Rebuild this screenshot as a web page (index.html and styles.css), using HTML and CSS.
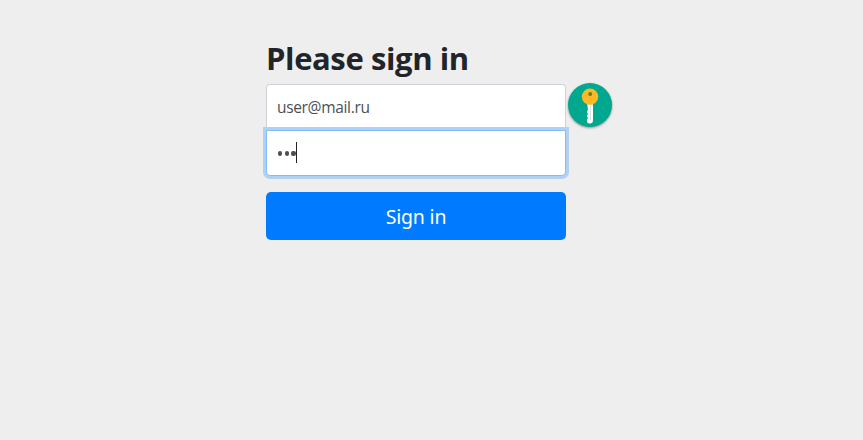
FILE: index.html
```html
<!DOCTYPE html>
<html lang="en">
<head>
<meta charset="utf-8">
<title>Sign in</title>
<link rel="stylesheet" href="styles.css">
</head>
<body>
<form class="signin">
  <h2 class="title">Please sign in</h2>
  <div class="field email"><span class="value">user@mail.ru</span>
    <svg class="key" viewBox="0 0 50 50" aria-hidden="true">
      <circle class="disc" cx="25" cy="25" r="22"/>
      <path class="blade" d="M22 22h6v18q0 3.500-3 3.500q-3 0-3-2.500v-2l1.500-1-1.500-1v-2l1.500-1-1.500-1v-2l1-1z"/>
      <path class="groove" d="M25.500 26v14"/>
      <circle class="bow" cx="25" cy="16.800" r="8.200"/>
      <circle class="hole" cx="25.200" cy="14" r="2"/>
    </svg>
  </div>
  <div class="field password"><span class="dots"><i></i><i></i><i></i></span><span class="caret"></span></div>
  <button class="submit" type="button">Sign in</button>
</form>
</body>
</html>
```
FILE: styles.css
```css
* { box-sizing: border-box; }
body { margin: 0; padding-top: 40px; background: #eee; color: #212529; font: 16px/1.5 "Open Sans", "Noto Sans", sans-serif; }
.signin { width: 300px; margin-left: 266px; }
.title { margin: 0 0 8px; font: 700 31px/36px "Open Sans", "Noto Sans", sans-serif; letter-spacing: -.4px; white-space: nowrap; }
.field { position: relative; display: flex; align-items: center; height: 46px; padding: 0 10px; border: 1px solid #ced4da; border-radius: 4px; background: #fff; color: #495057; }
.email { border-radius: 4px 4px 0 0; border-bottom: 0; }
.value { font-size: 15.5px; letter-spacing: -.33px; }
.password { padding-bottom: 2px; border-color: #80bdff; border-radius: 0 0 4px 4px; box-shadow: 0 0 0 3px #b2d0f2; }
.dots { display: flex; gap: 2.5px; padding: 3px .5px 0 1px; }
.dots i { width: 4.2px; height: 4.2px; border-radius: 50%; background: #495057; }
.caret { width: 1px; height: 21px; margin-left: -.1px; background: #222; }
.key { position: absolute; left: 298px; top: -5px; width: 50px; height: 50px; filter: drop-shadow(0 1px 1px #0006); }
.disc { fill: #00a88f; }
.blade { fill: #fff; }
.groove { stroke: #d2dfdd; }
.bow { fill: #fdb924; }
.hole { fill: #77751c; }
.submit { display: block; width: 300px; height: 48px; margin-top: 16px; padding: 2px 0 0; border: 0; border-radius: 5px; background: #007bff; color: #fff; font: 19.5px/46px "Noto Sans", sans-serif; letter-spacing: -.2px; }
```
